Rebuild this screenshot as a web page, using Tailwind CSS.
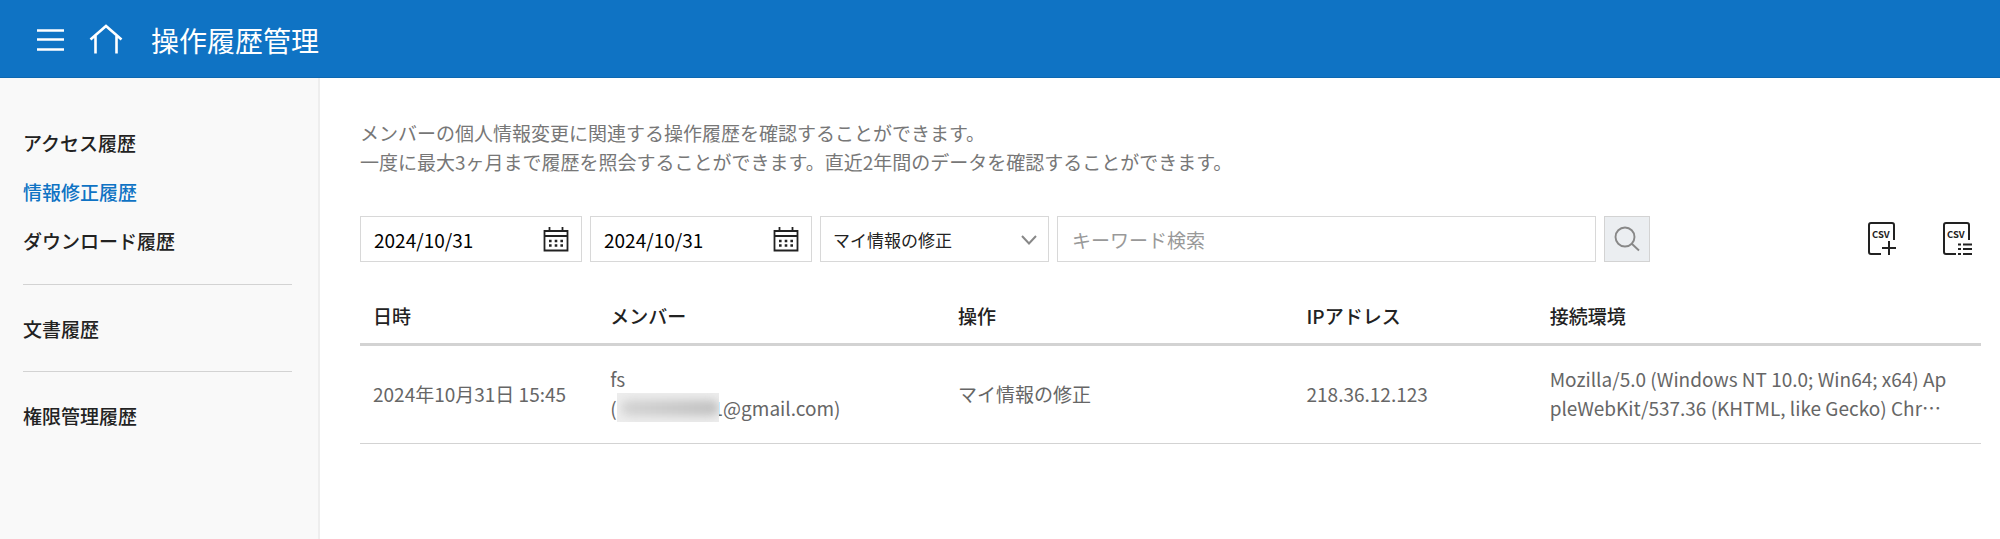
<!DOCTYPE html>
<html lang="ja">
<head>
<meta charset="utf-8">
<title>操作履歴管理</title>
<script src="https://cdn.jsdelivr.net/npm/@tailwindcss/browser@4"></script>
</head>
<body class="flex min-h-screen flex-col bg-white font-['Noto_Sans_CJK_JP','Noto_Sans',sans-serif] text-[19px] leading-[29px] text-[#666]">
<header class="flex h-[78px] items-center border-b border-[#0d68b1] bg-[#0f73c4] pt-0.5 pl-9 text-white">
  <button type="button" aria-label="メニュー" class="mr-6">
    <svg class="block h-7 w-7" viewBox="0 0 28 28" fill="none" stroke="currentColor" stroke-width="2.400"><path d="M1 4.500H28M1 13.500H28M1 23.500H28"/></svg>
  </button>
  <a href="#" aria-label="ホーム" class="mr-[27px]">
    <svg class="block h-9 w-9" viewBox="0 0 36 36" fill="none" stroke="currentColor" stroke-width="2.600"><path d="M2.500 17.500L18 4L33.500 17.500M7.500 14V31.500M28.500 14V31.500"/></svg>
  </a>
  <h1 class="text-[28px] leading-10">操作履歴管理</h1>
</header>
<div class="flex flex-1">
  <nav class="w-80 shrink-0 border-r-2 border-[#eee] bg-[#f9f9f9] pt-[50px] pr-[26px] pl-[23px] font-medium text-[#222]">
    <ul class="flex flex-col gap-5 pb-[29px]">
      <li><a href="#">アクセス履歴</a></li>
      <li><a href="#" aria-current="page" class="text-[#0f73c4]">情報修正履歴</a></li>
      <li><a href="#">ダウンロード履歴</a></li>
    </ul>
    <ul class="border-t border-[#d3d3d3] pt-[29px] pb-[28px]"><li><a href="#">文書履歴</a></li></ul>
    <ul class="border-t border-[#d3d3d3] pt-[29px]"><li><a href="#">権限管理履歴</a></li></ul>
  </nav>
  <main class="min-w-0 flex-1 pt-[40px] pr-[19px] pl-10">
    <p class="text-[#777]">メンバーの個人情報変更に関連する操作履歴を確認することができます。<br>一度に最大3ヶ月まで履歴を照会することができます。直近2年間のデータを確認することができます。</p>
    <form class="mt-10 flex h-[46px] items-stretch gap-2 text-black">
      <div class="flex w-[222px] items-center border border-[#d8d8d8] pr-3 pl-[13px]">
        <input type="text" aria-label="開始日" value="2024/10/31" class="min-w-0 flex-1 outline-none">
        <button type="button" aria-label="開始日を選択">
          <svg class="block h-[26px] w-[26px]" viewBox="0 0 26 26" fill="none" stroke="#222" stroke-width="1.800"><path d="M1.500 5H24.500V24.500H1.500ZM1.500 10H24.500M6.500 1V5M19.500 1V5"/><path stroke-width="2.600" stroke-dasharray="2.600 3.100" d="M6 15H20M6 19.500H20"/></svg>
        </button>
      </div>
      <div class="flex w-[222px] items-center border border-[#d8d8d8] pr-3 pl-[13px]">
        <input type="text" aria-label="終了日" value="2024/10/31" class="min-w-0 flex-1 outline-none">
        <button type="button" aria-label="終了日を選択">
          <svg class="block h-[26px] w-[26px]" viewBox="0 0 26 26" fill="none" stroke="#222" stroke-width="1.800"><path d="M1.500 5H24.500V24.500H1.500ZM1.500 10H24.500M6.500 1V5M19.500 1V5"/><path stroke-width="2.600" stroke-dasharray="2.600 3.100" d="M6 15H20M6 19.500H20"/></svg>
        </button>
      </div>
      <div class="relative flex w-[229px]">
        <select aria-label="操作" class="w-full appearance-none border border-[#d8d8d8] bg-white pl-3 text-[17px] text-[#222]"><option>マイ情報の修正</option></select>
        <svg class="pointer-events-none absolute top-[18px] right-3 h-3 w-4" viewBox="0 0 16 12" fill="none" stroke="#888" stroke-width="2"><path d="M1 2L8 9.500L15 2"/></svg>
      </div>
      <input type="text" aria-label="キーワード検索" placeholder="キーワード検索" class="max-w-[539px] min-w-0 flex-1 border border-[#d8d8d8] px-3.5 outline-none placeholder:text-[#999]">
      <button type="submit" aria-label="検索" class="flex w-[46px] shrink-0 items-center justify-center border border-[#d3d3d3] bg-[#ebeef1]">
        <svg class="h-[26px] w-[26px]" viewBox="0 0 26 26" fill="none" stroke="#888" stroke-width="1.900"><circle cx="11" cy="11" r="9.500"/><path d="M17.500 17.500L25 24.500"/></svg>
      </button>
      <div class="mr-[9px] ml-auto flex items-center gap-[45px]">
        <button type="button" aria-label="CSV作成">
          <svg class="block h-9 w-[30px]" viewBox="0 0 30 36" fill="none" stroke="#222" stroke-width="2"><path d="M14 33H4Q2 33 2 31V4Q2 2 4 2H25Q27 2 27 4V19"/><path d="M15 27H29M22 20V34"/><text x="5" y="17" font-size="9.500" font-weight="700" fill="#222" stroke="none" font-family="Noto Sans CJK JP">CSV</text></svg>
        </button>
        <button type="button" aria-label="CSV一覧">
          <svg class="block h-9 w-[30px]" viewBox="0 0 30 36" fill="none" stroke="#222" stroke-width="2"><path d="M14 33H4Q2 33 2 31V4Q2 2 4 2H25Q27 2 27 4V19"/><path d="M16 23.500H19M21 23.500H30M16 28H19M21 28H30M16 33H19M21 33H30"/><text x="5" y="17" font-size="9.500" font-weight="700" fill="#222" stroke="none" font-family="Noto Sans CJK JP">CSV</text></svg>
        </button>
      </div>
    </form>
    <table class="mt-[27px] w-full table-fixed border-collapse text-left">
      <colgroup><col class="w-[14.63%]"><col class="w-[21.46%]"><col class="w-[21.5%]"><col class="w-[15%]"><col></colgroup>
      <thead>
        <tr class="h-[55px] border-b-3 border-[#d3d3d3] text-[#222]">
          <th scope="col" class="px-[13px] font-medium">日時</th>
          <th scope="col" class="px-[13px] font-medium">メンバー</th>
          <th scope="col" class="px-[13px] font-medium">操作</th>
          <th scope="col" class="px-[13px] font-medium">IPアドレス</th>
          <th scope="col" class="px-[13px] font-medium">接続環境</th>
        </tr>
      </thead>
      <tbody>
        <tr class="h-[99px] border-b border-[#d3d3d3]">
          <td class="px-[13px] pb-0.5 whitespace-nowrap">2024年10月31日 15:45</td>
          <td class="px-[13px] pb-0.5 whitespace-nowrap">fs<br><span class="flex">(<span class="relative z-10 -mr-1.5 h-[29px] w-[102px] overflow-hidden bg-[#ededed]"><span class="mt-[7px] ml-1 block h-4 rounded-full bg-linear-to-r from-[#d4d4d4] to-[#c2c2c2] blur-xs"></span></span>1@gmail.com)</span></td>
          <td class="px-[13px] pb-0.5">マイ情報の修正</td>
          <td class="px-[13px] pb-0.5">218.36.12.123</td>
          <td class="px-[13px] pb-0.5 whitespace-nowrap">Mozilla/5.0 (Windows NT 10.0; Win64; x64) Ap<br>pleWebKit/537.36 (KHTML, like Gecko) Chr…</td>
        </tr>
      </tbody>
    </table>
  </main>
</div>
</body>
</html>
